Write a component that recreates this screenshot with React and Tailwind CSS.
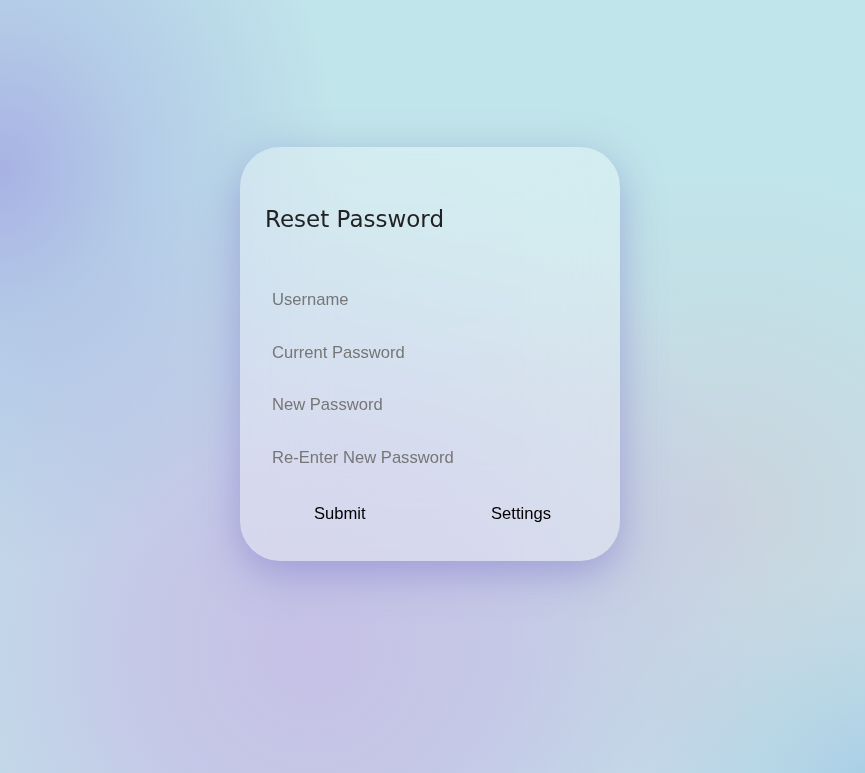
export default function App() {
  return (
    <div
      className="min-h-[773px] w-full flex justify-center pt-[147px] pr-[5px] font-['Liberation_Sans',Arial,sans-serif]"
      style={{
        background:
          "radial-gradient(ellipse 340px 400px at 0% 22%, rgba(168,178,228,1) 0%, rgba(168,178,228,0.5) 40%, rgba(168,178,228,0) 100%), radial-gradient(ellipse 470px 480px at 36% 84%, rgba(198,192,230,1) 0%, rgba(198,192,230,0.75) 40%, rgba(198,192,230,0) 100%), radial-gradient(ellipse 360px 340px at 84% 66%, rgba(204,208,220,0.85) 0%, rgba(204,208,220,0.4) 50%, rgba(204,208,220,0) 100%), radial-gradient(ellipse 240px 200px at 100% 100%, rgba(166,208,232,1) 0%, rgba(166,208,232,0) 100%), #c0e5ea",
      }}
    >
      <div className="w-[380px] h-[414px] rounded-[40px] bg-white/30 backdrop-blur-2xl shadow-[0_12px_40px_rgba(120,115,200,0.5)] flex flex-col pt-[57px]">
        <h1 className="px-[25px] h-[30px] leading-[30px] text-[23px] text-[#222] font-['DejaVu_Sans',Verdana,sans-serif]">
          Reset Password
        </h1>
        <div className="mt-[40px] flex flex-col px-[25px]">
          {["Username", "Current Password", "New Password", "Re-Enter New Password"].map((p, i) => (
            <input
              key={p}
              type={i === 0 ? "text" : "password"}
              placeholder={p}
              className="h-[52.5px] px-[7px] bg-transparent outline-none text-[16.6px] placeholder:text-[#767676] text-black"
            />
          ))}
        </div>
        <div className="flex justify-between pl-[74px] pr-[69px] h-[60px] items-center">
          <button className="text-[16.6px] text-black">Submit</button>
          <button className="text-[16.6px] text-black">Settings</button>
        </div>
      </div>
    </div>
  );
}
